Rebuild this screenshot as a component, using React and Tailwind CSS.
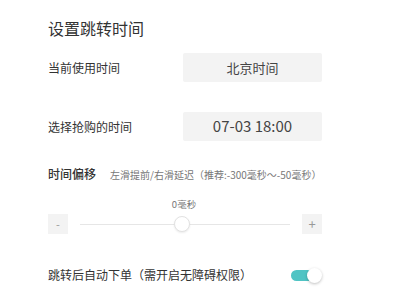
export default function App() {
  return (
    <div
      className="w-[399px] h-[299px] bg-white overflow-hidden"
      style={{ fontFamily: '"Noto Sans CJK SC", "Noto Sans", sans-serif' }}
    >
      <div className="ml-[48px] w-[274px] flex flex-col">
        <h1 className="mt-[17px] text-[16px] leading-[22px] font-normal text-[#333]">设置跳转时间</h1>

        <div className="mt-[14px] flex items-center justify-between">
          <span className="text-[12px] text-[#333]">当前使用时间</span>
          <div className="w-[139px] h-[29px] bg-[#f3f3f3] rounded-[2px] flex items-center justify-center text-[13px] text-[#444]">
            北京时间
          </div>
        </div>

        <div className="mt-[30px] flex items-center justify-between">
          <span className="text-[12px] text-[#333]">选择抢购的时间</span>
          <div className="w-[139px] h-[29px] bg-[#f3f3f3] rounded-[2px] flex items-center justify-center text-[15px] text-[#444]">
            07-03 18:00
          </div>
        </div>

        <div className="mt-[24px] flex items-center h-[18px]">
          <span className="text-[12px] font-medium text-[#333] w-[62px]">时间偏移</span>
          <span className="text-[10px] text-[#777] whitespace-nowrap">左滑提前/右滑延迟（推荐:-300毫秒～-50毫秒）</span>
        </div>

        <div className="mt-[15px] h-[12px] flex justify-center pr-[2px]">
          <span className="text-[9.5px] leading-[12px] text-[#777]">0毫秒</span>
        </div>

        <div className="mt-[4px] flex items-center h-[20px]">
          <div className="w-[20px] h-[20px] bg-[#f3f3f3] flex items-center justify-center text-[11px] text-[#999]">-</div>
          <div className="flex-1 mx-[12px] relative h-[20px] flex items-center">
            <div className="w-full h-[1px] bg-[#e6e6e6]"></div>
            <div className="absolute left-[94px] top-[2px] w-[16px] h-[16px] rounded-full bg-white border border-[#e2e2e2] shadow-[0_1px_2px_rgba(0,0,0,0.08)]"></div>
          </div>
          <div className="w-[20px] h-[20px] bg-[#f3f3f3] flex items-center justify-center text-[13px] text-[#999]">+</div>
        </div>

        <div className="mt-[32px] flex items-center justify-between">
          <span className="text-[12px] text-[#333]">跳转后自动下单（需开启无障碍权限）</span>
          <div className="relative w-[31px] h-[15px] flex items-center">
            <div className="w-[26px] h-[11px] rounded-full bg-[#50c4c4]"></div>
            <div className="absolute right-0 top-0 w-[15px] h-[15px] rounded-full bg-white shadow-[0_1px_3px_rgba(0,0,0,0.25)]"></div>
          </div>
        </div>
      </div>
    </div>
  )
}
